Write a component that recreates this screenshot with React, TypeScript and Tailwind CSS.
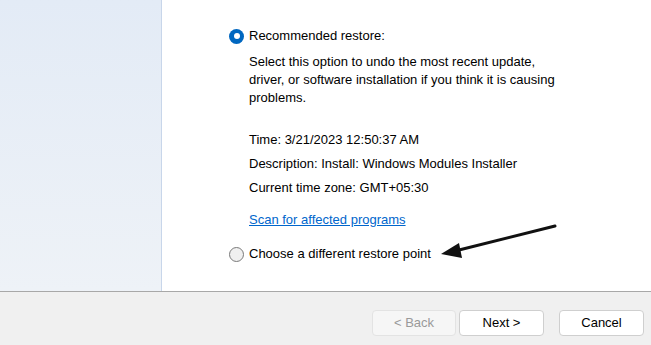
export default function App() {
  return (
    <div
      className="w-[651px] h-[345px] flex flex-col bg-white text-[13px] text-black overflow-hidden"
      style={{ fontFamily: '"Liberation Sans", Arial, sans-serif' }}
    >
      <div className="flex flex-1 min-h-0">
        {/* Left pane */}
        <div className="w-[162px] bg-gradient-to-b from-[#e3ebf6] to-[#eef2f7] border-r border-[#c8d6ea]" />

        {/* Main */}
        <div className="flex-1 pl-[67px] pt-[27px] relative">
          <div className="flex items-center gap-[5px] h-[18px]">
            <span className="w-[15px] h-[15px] rounded-full bg-[#0067c0] flex items-center justify-center">
              <span className="w-[6px] h-[6px] rounded-full bg-white" />
            </span>
            <span>Recommended restore:</span>
          </div>

          <div className="pl-[20px]">
            <p className="mt-[8px] leading-[18px] w-[320px]">
              Select this option to undo the most recent update, driver, or software installation if you think it is causing problems.
            </p>

            <div className="mt-[24px] flex flex-col gap-[6px] leading-[18px]">
              <p>Time: 3/21/2023 12:50:37 AM</p>
              <p>Description: Install: Windows Modules Installer</p>
              <p>Current time zone: GMT+05:30</p>
            </div>

            <a className="block mt-[14px] leading-[18px] text-[#0066cc] underline">
              Scan for affected programs
            </a>
          </div>

          <div className="flex items-center gap-[5px] h-[18px] mt-[16px]">
            <span className="w-[15px] h-[15px] rounded-full border border-[#7a7a7a] bg-[#f0f0f0]" />
            <span>Choose a different restore point</span>
          </div>

          {/* annotation arrow */}
          <svg className="absolute left-[275px] top-[220px]" width="125" height="42" viewBox="0 0 125 42">
            <line x1="118" y1="6" x2="14" y2="32" stroke="#111" strokeWidth="3" strokeLinecap="round" />
            <polygon points="4,34 22,23 25,38" fill="#111" />
          </svg>
        </div>
      </div>

      {/* Footer */}
      <div className="h-[54px] border-t border-[#a8a8a8] bg-[#f0f0f0] flex items-start justify-end pt-[18px] pr-[7px]">
        <button className="w-[84px] h-[26px] rounded-[4px] border border-[#e3e3e3] bg-[#f6f6f6] text-[#9a9a9a]">
          &lt; Back
        </button>
        <button className="ml-[3px] w-[85px] h-[26px] rounded-[4px] border border-[#cfcfcf] bg-white">
          Next &gt;
        </button>
        <button className="ml-[15px] w-[85px] h-[26px] rounded-[4px] border border-[#cfcfcf] bg-white">
          Cancel
        </button>
      </div>
    </div>
  );
}
